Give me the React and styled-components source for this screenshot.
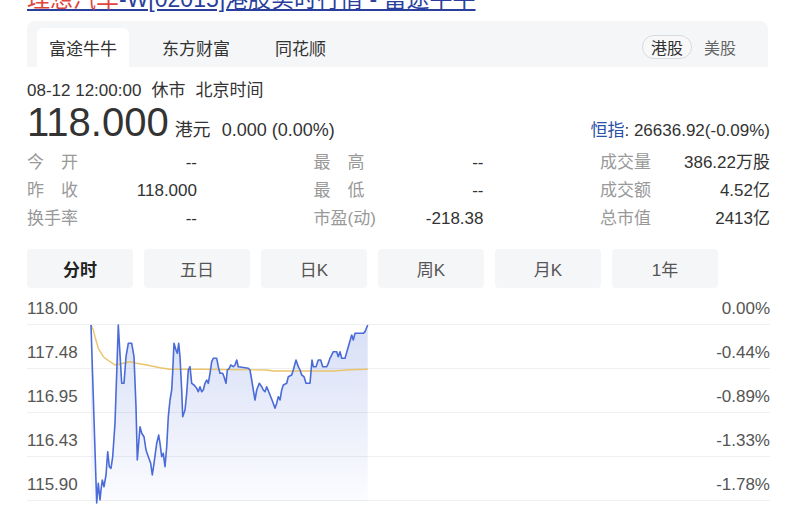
import styled, { createGlobalStyle } from 'styled-components';

const GlobalStyle = createGlobalStyle`
  body {
    margin: 0;
    background: #fff;
    font-family: "Liberation Sans", "Noto Sans CJK SC", sans-serif;
    color: #333;
  }
`;

const FONT = `"Liberation Sans", "Noto Sans CJK SC", sans-serif`;

const BLUE_LINE = [
  [91, 325], [96.7, 503], [98.3, 483.3], [100, 500], [101, 490], [102.3, 480], [104, 486.7],
  [106, 475], [107.7, 451.7], [109.3, 466.7], [111, 468.3], [112.7, 456.7], [115, 423.3],
  [116.7, 373.3], [118.3, 325], [121.7, 383.3], [124, 383.3], [126, 356.7], [128.3, 343.3],
  [131.7, 343.3], [134, 356.7], [136, 406.7], [137.3, 460], [140, 426.7], [141.7, 433.3],
  [144, 436.7], [146, 450], [148.3, 456.7], [150.7, 463.3], [152.3, 475], [154, 463.3],
  [156.7, 443.3], [158.7, 435], [160, 443.3], [161.7, 456.7], [163.3, 453.3], [165, 466.7],
  [166.7, 446.7], [168.3, 416.7], [170, 400], [171.7, 390], [172.7, 371.7], [174, 343.3],
  [176, 350], [177.3, 353.3], [178.7, 343.3], [180, 356.7], [181.7, 390], [182.7, 416.7],
  [185, 410], [186.7, 393.3], [188.3, 370], [190, 366.7], [191.7, 383.3], [194, 385],
  [196.7, 388.3], [198.3, 391.7], [200, 386.7], [201.7, 391.7], [203.3, 390], [205, 383.3],
  [206.7, 380], [208.3, 383.3], [210, 373.3], [211.7, 361.7], [213.3, 358.3], [216.7, 358.3],
  [218.3, 366.7], [220, 373.3], [222.7, 373.3], [224, 376.7], [226, 383.3], [227.3, 370],
  [229.3, 368.3], [230.7, 365], [233.3, 366.7], [235, 365], [236.7, 360], [238.3, 366.7],
  [248.3, 368.3], [250, 370], [251.7, 380], [253.3, 390], [255, 400], [256.7, 390],
  [259.3, 383.3], [261.7, 386.7], [263.3, 390], [265, 391.7], [266.7, 386.7], [268.7, 391.7],
  [270.7, 396.7], [272.7, 401.7], [275, 408.3], [276.7, 403.3], [278.3, 396.7], [280, 400],
  [281.7, 390], [283.3, 385], [286.7, 383.3], [288.3, 376.7], [291.7, 375], [293.3, 370],
  [296, 360], [298.3, 366.7], [300, 370], [301.7, 375], [304, 376.7], [306, 383.3],
  [310, 383.3], [312, 360], [313.3, 366.7], [316, 366.7], [318.3, 360], [320.7, 360],
  [322.7, 366.7], [326.7, 366.7], [328.3, 363.3], [330, 358.3], [333.3, 351.7], [336.7, 351.7],
  [338.3, 356.7], [340, 351.7], [341.7, 358.3], [345, 358.3], [348.3, 346.7], [351.7, 335],
  [353.3, 340], [355, 333.3], [363.3, 333.3], [365, 331.7], [367.7, 325],
];

const AVG_LINE = [
  [91, 325], [93.3, 330], [95, 336.7], [98.3, 348.3], [103.3, 356.7], [110, 361.7],
  [115, 365], [120, 364], [130, 361.7], [136.7, 363.3], [146.7, 365], [160, 367.7],
  [170, 369.3], [200, 369.3], [266.7, 370], [273.3, 371], [333.3, 371], [350, 369.7],
  [367.7, 369.3],
];

const tabs = ['富途牛牛', '东方财富', '同花顺'];
const periods = ['分时', '五日', '日K', '周K', '月K', '1年'];

const stats = [
  [['今开', '--'], ['最高', '--'], ['成交量', '386.22万股']],
  [['昨收', '118.000'], ['最低', '--'], ['成交额', '4.52亿']],
  [['换手率', '--'], ['市盈(动)', '-218.38'], ['总市值', '2413亿']],
];

const axis = [
  ['118.00', '0.00%'],
  ['117.48', '-0.44%'],
  ['116.95', '-0.89%'],
  ['116.43', '-1.33%'],
  ['115.90', '-1.78%'],
];

const Page = styled.div`
  width: 743px;
  padding-left: 27px;
  font-family: ${FONT};
`;

const Title = styled.a`
  display: block;
  margin-top: -16px;
  height: 30px;
  font-size: 23px;
  line-height: 30px;
  color: #2a3f9d;
  text-decoration: underline;
  white-space: nowrap;
`;

const Red = styled.span`
  color: #e0453c;
`;

const TabPanel = styled.div`
  display: flex;
  align-items: flex-end;
  justify-content: space-between;
  width: 741px;
  height: 46px;
  margin-top: 7px;
  padding: 0 23px 0 10px;
  box-sizing: border-box;
  background: #f5f6f8;
  border-radius: 8px 8px 0 0;
`;

const TabList = styled.div`
  display: flex;
  gap: 21px;
`;

const Tab = styled.div`
  height: 39px;
  padding: 0 12px;
  display: flex;
  align-items: center;
  font-size: 17px;
  color: #333;
  background: ${(p) => (p.$active ? '#fff' : 'transparent')};
  border-radius: 6px 6px 0 0;
`;

const Markets = styled.div`
  display: flex;
  gap: 3px;
  margin-bottom: 8px;
`;

const Market = styled.div`
  height: 22px;
  padding: 0 8px;
  display: flex;
  align-items: center;
  font-size: 16px;
  color: ${(p) => (p.$active ? '#333' : '#666')};
  border: 1px solid ${(p) => (p.$active ? '#d9dadd' : 'transparent')};
  border-radius: 12px;
  background: ${(p) => (p.$active ? '#f8f8f9' : 'transparent')};
`;

const DateLine = styled.div`
  margin-top: 13px;
  height: 22px;
  font-size: 17px;
  line-height: 22px;
  color: #333;
  display: flex;
  gap: 10px;
`;

const PriceRow = styled.div`
  display: flex;
  align-items: baseline;
  justify-content: space-between;
  height: 40px;
  line-height: 40px;
`;

const PriceLeft = styled.div`
  display: flex;
  align-items: baseline;
`;

const BigPrice = styled.span`
  font-size: 40px;
  color: #333;
`;

const Currency = styled.span`
  font-size: 18px;
  margin-left: 6px;
`;

const Change = styled.span`
  font-size: 18px;
  margin-left: 11px;
`;

const Index = styled.span`
  font-size: 17px;
  color: #333;
`;

const IndexName = styled.span`
  color: #2a4fa6;
`;

const StatsGrid = styled.div`
  margin-top: 7px;
  display: flex;
  flex-direction: column;
`;

const StatsRow = styled.div`
  display: flex;
  justify-content: space-between;
  height: 28px;
  line-height: 28px;
`;

const StatCell = styled.div`
  width: 170px;
  height: 28px;
  display: flex;
  justify-content: space-between;
  align-items: baseline;
  font-size: 17px;
`;

const StatLabel = styled.span`
  display: inline-block;
  min-width: 3em;
  text-align-last: justify;
  color: #999;
`;

const StatValue = styled.span`
  color: #333;
`;

const PeriodRow = styled.div`
  margin-top: 16px;
  display: flex;
  gap: 11px;
`;

const PeriodButton = styled.div`
  width: 106px;
  height: 39px;
  display: flex;
  align-items: center;
  justify-content: center;
  border-radius: 4px;
  background: #f5f6f8;
  font-size: 17px;
  font-weight: ${(p) => (p.$active ? 700 : 400)};
  color: ${(p) => (p.$active ? '#222' : '#555')};
`;

const Chart = styled.div`
  position: relative;
  height: 219px;
`;

const AxisRow = styled.div`
  height: ${(p) => (p.$first ? 37 : 44)}px;
  box-sizing: border-box;
  display: flex;
  justify-content: space-between;
  align-items: flex-end;
  padding-bottom: 4px;
  border-bottom: 1px solid #eeeff1;
  font-size: 17px;
  line-height: 22px;
  color: #555;
`;

const Plot = styled.svg`
  position: absolute;
  left: 0;
  top: 0;
  overflow: visible;
  pointer-events: none;
`;

const toPoints = (pts) => pts.map(([x, y]) => `${x},${y}`).join(' ');

const App = () => {
  const fill = toPoints([...BLUE_LINE, [367.7, 501], [91, 501]]);
  return (
    <Page>
      <GlobalStyle />
      <Title href="#">
        <Red>理想汽车</Red>-W[02015]港股实时行情 - 富途牛牛
      </Title>

      <TabPanel>
        <TabList>
          {tabs.map((t, i) => (
            <Tab key={t} $active={i === 0}>{t}</Tab>
          ))}
        </TabList>
        <Markets>
          <Market $active>港股</Market>
          <Market>美股</Market>
        </Markets>
      </TabPanel>

      <DateLine>
        <span>08-12 12:00:00</span>
        <span>休市</span>
        <span>北京时间</span>
      </DateLine>

      <PriceRow>
        <PriceLeft>
          <BigPrice>118.000</BigPrice>
          <Currency>港元</Currency>
          <Change>0.000 (0.00%)</Change>
        </PriceLeft>
        <Index>
          <IndexName>恒指</IndexName>: 26636.92(-0.09%)
        </Index>
      </PriceRow>

      <StatsGrid>
        {stats.map((row, r) => (
          <StatsRow key={r}>
            {row.map(([label, value]) => (
              <StatCell key={label}>
                <StatLabel>{label}</StatLabel>
                <StatValue>{value}</StatValue>
              </StatCell>
            ))}
          </StatsRow>
        ))}
      </StatsGrid>

      <PeriodRow>
        {periods.map((p, i) => (
          <PeriodButton key={p} $active={i === 0}>{p}</PeriodButton>
        ))}
      </PeriodRow>

      <Chart>
        {axis.map(([price, pct], i) => (
          <AxisRow key={price} $first={i === 0}>
            <span>{price}</span>
            <span>{pct}</span>
          </AxisRow>
        ))}
        <Plot width="743" height="219" viewBox="27 288 743 219">
          <defs>
            <linearGradient id="area" x1="0" y1="0" x2="0" y2="1">
              <stop offset="0%" stopColor="#5a78dc" stopOpacity="0.24" />
              <stop offset="100%" stopColor="#5a78dc" stopOpacity="0.02" />
            </linearGradient>
          </defs>
          <polygon points={fill} fill="url(#area)" />
          <polyline
            points={toPoints(AVG_LINE)}
            fill="none"
            stroke="#e9c46a"
            strokeWidth="1.4"
            strokeLinejoin="round"
          />
          <polyline
            points={toPoints(BLUE_LINE)}
            fill="none"
            stroke="#4a6bd8"
            strokeWidth="1.6"
            strokeLinejoin="round"
          />
        </Plot>
      </Chart>
    </Page>
  );
};

export default App;
